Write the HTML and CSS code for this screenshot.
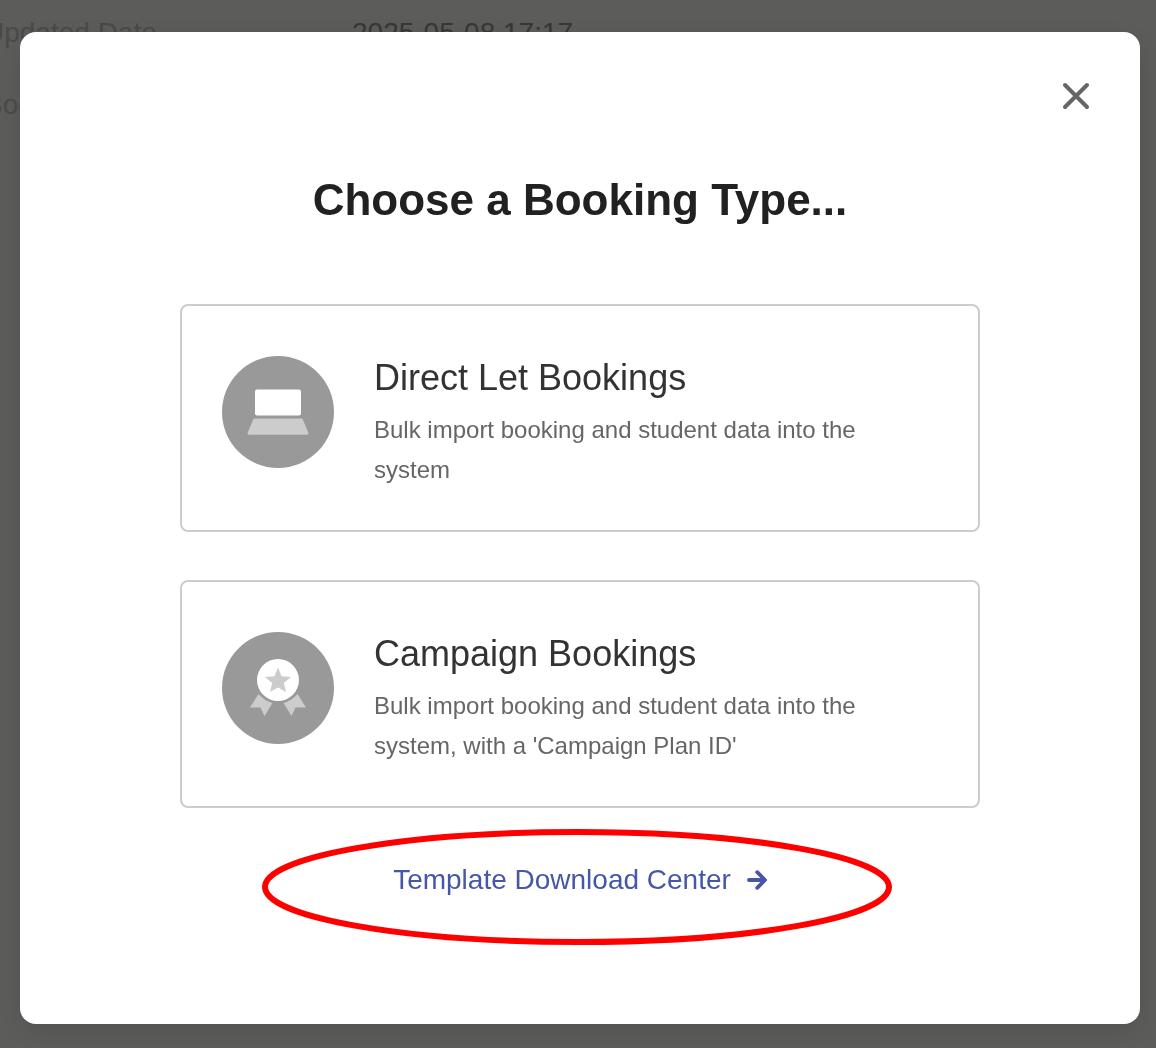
FILE: index.html
```html
<!DOCTYPE html>
<html lang="en">
<head>
  <meta charset="utf-8">
  <meta name="viewport" content="width=device-width, initial-scale=1">
  <title>Choose a Booking Type</title>
  <link rel="stylesheet" href="styles.css">
</head>
<body>
  <main class="page" aria-hidden="true">
    <dl class="details">
      <dt>Updated Date</dt>
      <dd>2025-05-08 17:17</dd>
      <dt>Boo</dt>
      <dd></dd>
    </dl>
  </main>

  <div class="overlay">
    <section class="modal" role="dialog" aria-modal="true" aria-labelledby="modal-title">
      <header class="modal-bar">
        <button class="close" type="button" aria-label="Close">
          <svg width="32" height="32" viewBox="0 0 32 32" fill="none" stroke="#666" stroke-width="4" stroke-linecap="round">
            <path d="M5 5L27 27M27 5L5 27"/>
          </svg>
        </button>
      </header>
      <div class="modal-body">
        <h1 id="modal-title" class="title">Choose a Booking Type...</h1>

        <div class="options">
          <button class="option" type="button">
            <svg class="option-icon" viewBox="0 0 112 112">
              <circle cx="56" cy="56" r="56" fill="#999"/>
              <rect x="33" y="33.5" width="46" height="26" rx="2" fill="#fff"/>
              <path d="M33 62.5h46q1.500 0 2 1.200l5.300 13q.6 2-1.300 2h-58q-1.900 0-1.300-2l5.300-13q.5-1.200 2-1.200z" fill="#ccc"/>
            </svg>
            <span class="option-text">
              <span class="option-title">Direct Let Bookings</span>
              <span class="option-desc">Bulk import booking and student data into the system</span>
            </span>
          </button>

          <button class="option" type="button">
            <svg class="option-icon" viewBox="0 0 112 112">
              <circle cx="56" cy="56" r="56" fill="#999"/>
              <path d="M36.500 62Q42 68.500 50.500 71L42.500 84L38.500 75.500L28 75.500zM75.500 62Q70 68.500 61.500 71L69.500 84L73.500 75.500L84 75.500z" fill="#ccc"/>
              <circle cx="56" cy="48" r="21" fill="#fff"/>
              <path d="M56 35.500L59.600 44.200L69 45L61.900 51.100L64 60L56 55.500L48 60L50.100 51.100L43 45L52.400 44.200z" fill="#ccc"/>
            </svg>
            <span class="option-text">
              <span class="option-title">Campaign Bookings</span>
              <span class="option-desc">Bulk import booking and student data into the system, with a 'Campaign Plan ID'</span>
            </span>
          </button>
        </div>

        <div class="download">
          <a class="download-link" href="#templates">
            Template Download Center
            <svg width="20" height="20" viewBox="0 0 20 20" fill="none" stroke="currentColor" stroke-width="3.800" stroke-linejoin="round" stroke-linecap="round">
              <path d="M2 10H17.500M10.200 2.200L18 10L10.200 17.800"/>
            </svg>
          </a>
          <svg class="highlight" viewBox="0 0 630 116" fill="none" stroke="#f00" stroke-width="6" aria-hidden="true">
            <ellipse cx="315" cy="58" rx="312" ry="55"/>
          </svg>
        </div>
      </div>
    </section>
  </div>
</body>
</html>
```
FILE: styles.css
```css
* {
  box-sizing: border-box;
}

body {
  margin: 0;
  background: #fffffa;
  color: #212121;
  font-family: "Liberation Sans", Helvetica, Arial, sans-serif;
  overflow: hidden;
}

button {
  font: inherit;
  color: inherit;
  cursor: pointer;
}

.page {
  margin-left: -16px;
}

.details {
  display: grid;
  grid-template-columns: 368px 1fr;
  grid-auto-rows: 40px;
  row-gap: 32px;
  margin: 13px 0 0;
  font-size: 28px;
  line-height: 40px;
}

.details dt {
  color: #cdcdc8;
}

.details dd {
  margin: 0;
  color: #989894;
}

.overlay {
  position: fixed;
  inset: 0;
  overflow: auto;
  padding: 32px 16px 24px 20px;
  background: rgba(0, 0, 0, 0.64);
}

.modal {
  min-height: 100%;
  border-radius: 16px;
  background: #fff;
  box-shadow: 0 8px 32px rgba(0, 0, 0, 0.12);
}

.modal-bar {
  display: flex;
  justify-content: flex-end;
  padding: 48px 48px 0;
}

.close {
  display: flex;
  padding: 0;
  border: 0;
  background: none;
}

.modal-body {
  max-width: 848px;
  margin: 0 auto;
  padding: 60px 24px 80px;
}

.title {
  margin: 0 0 76px;
  font-size: 44px;
  line-height: 56px;
  text-align: center;
}

.options {
  display: grid;
  gap: 48px;
}

.option {
  display: flex;
  align-items: flex-start;
  gap: 40px;
  padding: 48px 40px 40px;
  border: 2px solid #ccc;
  border-radius: 8px;
  background: #fff;
  text-align: left;
}

.option-icon {
  flex: none;
  width: 112px;
  height: 112px;
  margin-top: 2px;
}

.option-text {
  display: grid;
  gap: 8px;
  max-width: 520px;
}

.option-title {
  color: #333;
  font-size: 36px;
  line-height: 48px;
}

.option-desc {
  color: #666;
  font-size: 24px;
  line-height: 40px;
}

.download {
  position: relative;
  display: flex;
  justify-content: center;
  margin-top: 52px;
}

.download-link {
  display: flex;
  align-items: center;
  gap: 16px;
  color: #4557a5;
  font-size: 28px;
  line-height: 40px;
  text-decoration: none;
}

.highlight {
  position: absolute;
  top: -31px;
  left: calc(50% - 318px);
  width: 630px;
  height: 116px;
  pointer-events: none;
}
```
